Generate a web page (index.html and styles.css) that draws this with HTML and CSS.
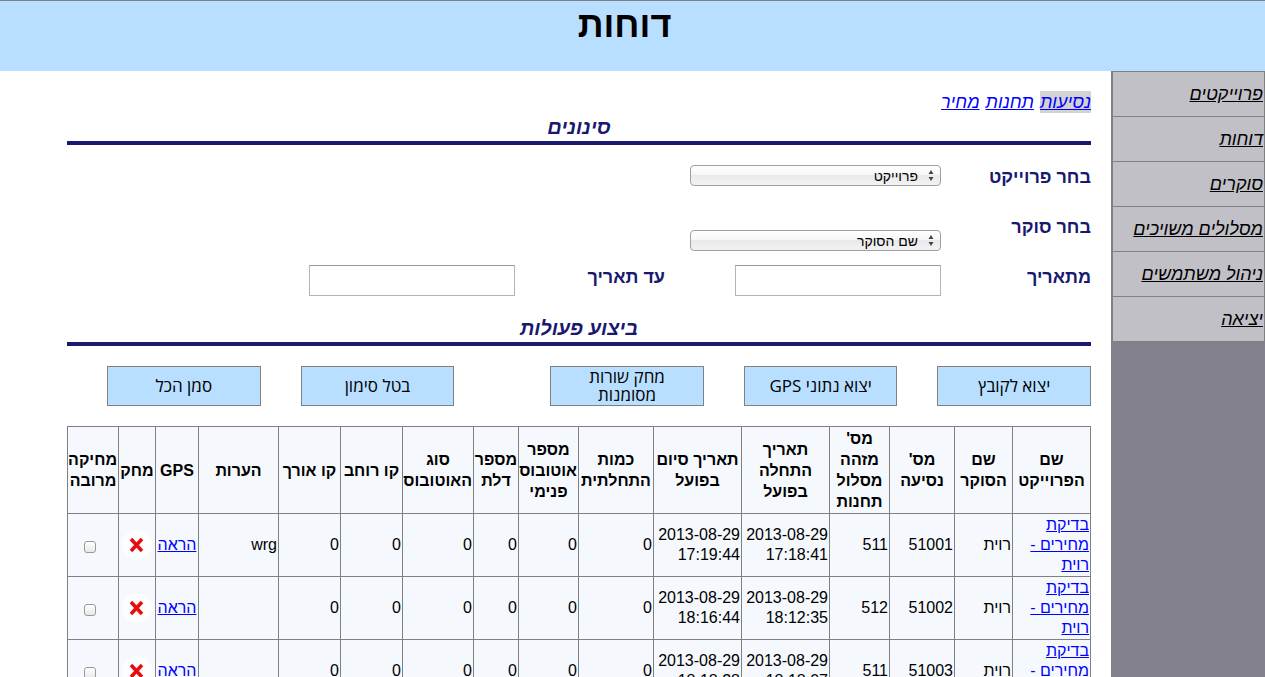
FILE: index.html
```html
<!DOCTYPE html>
<html lang="he" dir="rtl">
<head>
<meta charset="utf-8">
<title>דוחות</title>
<link rel="stylesheet" href="styles.css">
</head>
<body>
<header class="page-header"><h1 class="page-title">דוחות</h1></header>
<div class="layout">
  <nav class="sidebar">
    <ul class="menu">
      <li class="menu-item"><a class="menu-link" href="#">פרוייקטים</a></li>
      <li class="menu-item"><a class="menu-link" href="#">דוחות</a></li>
      <li class="menu-item"><a class="menu-link" href="#">סוקרים</a></li>
      <li class="menu-item"><a class="menu-link" href="#">מסלולים משויכים</a></li>
      <li class="menu-item"><a class="menu-link" href="#">ניהול משתמשים</a></li>
      <li class="menu-item"><a class="menu-link" href="#">יציאה</a></li>
    </ul>
  </nav>
  <main class="content">
    <nav class="tabs">
      <a class="tab tab-active" href="#">נסיעות</a>
      <a class="tab" href="#">תחנות</a>
      <a class="tab" href="#">מחיר</a>
    </nav>
    <h2 class="section-title">סינונים</h2>
    <form class="filters">
      <div class="filter-row">
        <label class="filter-label" for="project">בחר פרוייקט</label>
        <span class="select-wrap"><select class="select" id="project"><option>פרוייקט</option></select><svg class="select-arrows" viewBox="0 0 6 11" aria-hidden="true"><path d="M3 0L5.500 4H.5zM3 11L.5 7h5z"/></svg></span>
      </div>
      <div class="filter-row">
        <label class="filter-label" for="surveyor">בחר סוקר</label>
        <span class="select-wrap select-low"><select class="select" id="surveyor"><option>שם הסוקר</option></select><svg class="select-arrows" viewBox="0 0 6 11" aria-hidden="true"><path d="M3 0L5.500 4H.5zM3 11L.5 7h5z"/></svg></span>
      </div>
      <div class="filter-row">
        <label class="filter-label" for="from">מתאריך</label>
        <input class="date" id="from" type="text">
        <label class="filter-label filter-next" for="to">עד תאריך</label>
        <input class="date" id="to" type="text">
      </div>
    </form>
    <h2 class="section-title">ביצוע פעולות</h2>
    <div class="actions">
      <button class="action" type="button">יצוא לקובץ</button>
      <button class="action" type="button">יצוא נתוני GPS</button>
      <button class="action" type="button">מחק שורות מסומנות</button>
      <button class="action action-group" type="button">בטל סימון</button>
      <button class="action" type="button">סמן הכל</button>
    </div>
    <table class="trips">
      <colgroup>
        <col class="w-project"><col class="w-surveyor"><col class="w-trip"><col class="w-route">
        <col class="w-date"><col class="w-date"><col class="w-amount"><col class="w-bus">
        <col class="w-door"><col class="w-type"><col class="w-coord"><col class="w-coord">
        <col class="w-notes"><col class="w-gps"><col class="w-delete"><col class="w-multi">
      </colgroup>
      <thead>
        <tr>
          <th>שם הפרוייקט</th><th>שם הסוקר</th><th>מס' נסיעה</th><th>מס' מזהה מסלול תחנות</th>
          <th>תאריך התחלה בפועל</th><th>תאריך סיום בפועל</th><th>כמות התחלתית</th><th>מספר אוטובוס פנימי</th>
          <th>מספר דלת</th><th>סוג האוטובוס</th><th>קו רוחב</th><th>קו אורך</th>
          <th>הערות</th><th>GPS</th><th>מחק</th><th>מחיקה מרובה</th>
        </tr>
      </thead>
      <tbody>
        <tr>
          <td><a href="#">בדיקת מחירים - רוית</a></td><td>רוית</td><td>51001</td><td>511</td>
          <td><span class="stamp">2013-08-29 17:18:41</span></td><td><span class="stamp">2013-08-29 17:19:44</span></td>
          <td>0</td><td>0</td><td>0</td><td>0</td><td>0</td><td>0</td><td>wrg</td>
          <td class="center"><a href="#">הראה</a></td>
          <td class="center"><button class="delete" type="button" aria-label="מחק"><svg class="cross" viewBox="0 0 30 30"><circle cx="15" cy="15" r="15" fill="#fff" opacity=".7"/><path d="M9 9L20 21M20 9L9 21" stroke="#e80c0c" stroke-width="3.500"/></svg></button></td>
          <td class="center"><input class="check" type="checkbox" aria-label="מחיקה מרובה 51001"></td>
        </tr>
        <tr>
          <td><a href="#">בדיקת מחירים - רוית</a></td><td>רוית</td><td>51002</td><td>512</td>
          <td><span class="stamp">2013-08-29 18:12:35</span></td><td><span class="stamp">2013-08-29 18:16:44</span></td>
          <td>0</td><td>0</td><td>0</td><td>0</td><td>0</td><td>0</td><td></td>
          <td class="center"><a href="#">הראה</a></td>
          <td class="center"><button class="delete" type="button" aria-label="מחק"><svg class="cross" viewBox="0 0 30 30"><circle cx="15" cy="15" r="15" fill="#fff" opacity=".7"/><path d="M9 9L20 21M20 9L9 21" stroke="#e80c0c" stroke-width="3.500"/></svg></button></td>
          <td class="center"><input class="check" type="checkbox" aria-label="מחיקה מרובה 51002"></td>
        </tr>
        <tr>
          <td><a href="#">בדיקת מחירים - רוית</a></td><td>רוית</td><td>51003</td><td>511</td>
          <td><span class="stamp">2013-08-29 18:18:07</span></td><td><span class="stamp">2013-08-29 18:18:28</span></td>
          <td>0</td><td>0</td><td>0</td><td>0</td><td>0</td><td>0</td><td></td>
          <td class="center"><a href="#">הראה</a></td>
          <td class="center"><button class="delete" type="button" aria-label="מחק"><svg class="cross" viewBox="0 0 30 30"><circle cx="15" cy="15" r="15" fill="#fff" opacity=".7"/><path d="M9 9L20 21M20 9L9 21" stroke="#e80c0c" stroke-width="3.500"/></svg></button></td>
          <td class="center"><input class="check" type="checkbox" aria-label="מחיקה מרובה 51003"></td>
        </tr>
      </tbody>
    </table>
  </main>
</div>
</body>
</html>
```
FILE: styles.css
```css
* { box-sizing: border-box; }
html { scrollbar-width: none; }
body {
  margin: 0;
  min-height: 100vh;
  display: flex;
  flex-direction: column;
  background: #fff;
  color: #000;
  font: 16px/20px "Liberation Sans", Arial, sans-serif;
}
a { color: #00f; }

.page-header {
  height: 71px;
  padding: 2px 16px 0 0;
  border-top: 1px solid #808080;
  background: #b8dfff;
  text-align: center;
}
.page-title { margin: 0; font-size: 36px; line-height: 44px; }

.layout { flex: 1; display: flex; }
.sidebar { flex: 0 0 154px; background: #82808c; }
.menu {
  margin: 0;
  padding: 0;
  list-style: none;
  border: 1px solid #808080;
  border-width: 1px 1px 0 2px;
}
.menu-item {
  height: 45px;
  padding: 12px 1px;
  border-bottom: 1px solid #808080;
  background: #c1c0c7;
  white-space: nowrap;
}
.menu-link { color: #000; font-size: 18px; font-style: italic; }

.content { flex: 1; min-width: 0; padding: 20px 20px 0 67px; }
.tabs { display: flex; gap: 6px; font-size: 18px; font-style: italic; line-height: 22px; }
.tab-active { background: #d3d3d3; }
.section-title {
  margin: 0;
  border-bottom: 4px solid #191970;
  color: #191970;
  font-size: 20px;
  font-style: italic;
  line-height: 28px;
  text-align: center;
}

.filters { padding-top: 20px; height: 169px; color: #191970; }
.filter-row { display: flex; align-items: flex-start; height: 50px; }
.filter-label { width: 150px; padding-top: 1px; font-size: 18px; font-weight: bold; line-height: 22px; }
.filter-next { margin-inline-start: 70px; }
.select-wrap { position: relative; width: 251px; }
.select-low { padding-top: 15px; }
.select {
  display: block;
  appearance: none;
  width: 100%;
  height: 21px;
  padding: 0 22px 0 8px;
  border: 1px solid #a0a0a0;
  border-radius: 4px;
  background: linear-gradient(#fff, #f6f6f6 45%, #eaeaea 50%, #f2f2f2);
  color: #000;
  font: 14px "Liberation Sans", Arial, sans-serif;
}
.select-arrows { position: absolute; right: 7px; bottom: 5px; width: 6px; height: 11px; fill: #444; }
.date {
  width: 206px;
  height: 31px;
  padding: 0 4px;
  border: 1px solid #b4b4b4;
  border-top-color: #999;
  background: #fff;
  font: inherit;
}

.actions { display: flex; gap: 40px; padding: 20px 0; }
.action {
  width: 15%;
  height: 40px;
  padding: 0 24px;
  border: 1px solid #808080;
  background: #b8dfff;
  color: #000;
  font: 17px/18px "Open Sans", "Liberation Sans", sans-serif;
}
.action-group { margin-inline-start: 56px; }

.trips { width: 100%; table-layout: fixed; border-collapse: collapse; background: #f5f9fd; }
.trips th, .trips td { padding: 1px; border: 1px solid #808080; text-align: right; }
.trips th { text-align: center; line-height: 21px; }
.trips .center { text-align: center; }
.stamp { display: block; direction: ltr; text-align: right; }
.w-project { width: 78px; }
.w-surveyor { width: 58px; }
.w-trip { width: 65px; }
.w-route { width: 60px; }
.w-date { width: 88px; }
.w-amount { width: 75px; }
.w-bus { width: 60px; }
.w-door { width: 45px; }
.w-type { width: 71px; }
.w-coord { width: 62px; }
.w-notes { width: 80px; }
.w-gps { width: 43px; }
.w-delete { width: 37px; }
.w-multi { width: 51px; }
.delete { display: block; margin: 0 auto; padding: 0; border: 0; background: none; }
.cross { display: block; width: 30px; height: 30px; }
.check {
  appearance: none;
  display: block;
  width: 12px;
  height: 12px;
  margin: 3px 21px 0 auto;
  border: 1px solid #9a9a9a;
  border-radius: 3px;
  background: linear-gradient(#fff, #e8e8e8);
}
```
